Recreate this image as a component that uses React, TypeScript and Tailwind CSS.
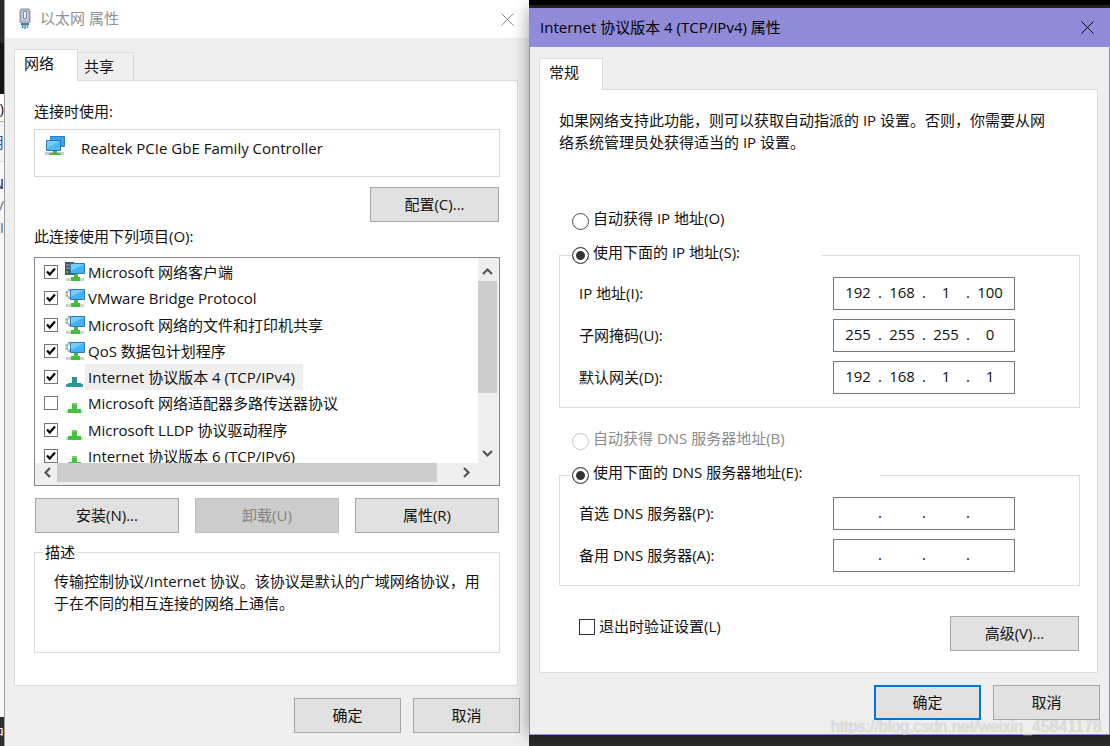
import { useState } from 'react';
import type { ReactNode } from 'react';
import clsx from 'clsx';

type IconKind = 'client' | 'service' | 'protocol';

// Components bound to the adapter, in list order
const CONNECTION_ITEMS: { name: string; icon: IconKind; checked: boolean }[] = [
  { name: 'Microsoft 网络客户端', icon: 'client', checked: true },
  { name: 'VMware Bridge Protocol', icon: 'service', checked: true },
  { name: 'Microsoft 网络的文件和打印机共享', icon: 'service', checked: true },
  { name: 'QoS 数据包计划程序', icon: 'service', checked: true },
  { name: 'Internet 协议版本 4 (TCP/IPv4)', icon: 'protocol', checked: true },
  { name: 'Microsoft 网络适配器多路传送器协议', icon: 'protocol', checked: false },
  { name: 'Microsoft LLDP 协议驱动程序', icon: 'protocol', checked: true },
  { name: 'Internet 协议版本 6 (TCP/IPv6)', icon: 'protocol', checked: true },
];

const IP_FIELDS = [
  { id: 'ip', label: 'IP 地址(I):', value: ['192', '168', '1', '100'] },
  { id: 'mask', label: '子网掩码(U):', value: ['255', '255', '255', '0'] },
  { id: 'gateway', label: '默认网关(D):', value: ['192', '168', '1', '1'] },
];

const DNS_FIELDS = [
  { id: 'dns1', label: '首选 DNS 服务器(P):', value: ['', '', '', ''] },
  { id: 'dns2', label: '备用 DNS 服务器(A):', value: ['', '', '', ''] },
];

function EthernetIcon() {
  return (
    <svg width="14" height="22" viewBox="0 0 14 22" aria-hidden="true">
      <path d="M3 1h8l1 2v11l-2 2H4l-2-2V3z" fill="#aeb9ca" stroke="#8390a5" />
      <path d="M4 3h6v9H4z" fill="#c9d2df" />
      <path d="M5.500 3.500h3v7h-3z" fill="#e8edf4" stroke="#7a879c" />
      <path d="M3 15h8v2H3z" fill="#5d7289" />
      <path d="M4 17h1.500v3H4zM6.300 17h1.500v4H6.300zM8.700 17h1.500v3H8.700z" fill="#2b9fd0" />
    </svg>
  );
}

function AdapterIcon() {
  return (
    <svg width="22" height="22" viewBox="0 0 22 22" aria-hidden="true">
      <path d="M5.500 1.500h14v10h-14z" fill="#3aa5ee" stroke="#2b7fb9" />
      <path d="M1.500 5.500h14v10h-14z" fill="#4db8fb" stroke="#2a78ad" />
      <path d="M2 6h13L2 13z" fill="#7acbff" />
      <path d="M0 17h19v3H0z" fill="#c9cdcb" />
      <path d="M8 16h4v2h3l1 2H4l1-2h3z" fill="#42b93c" />
    </svg>
  );
}

function ItemIcon({ kind, selected }: { kind: IconKind; selected: boolean }) {
  if (kind === 'protocol') {
    return (
      <svg width="20" height="20" viewBox="0 0 20 20" aria-hidden="true">
        <path d="M1 17h17v3H1z" fill={selected ? '#4d8fc7' : '#cfd8cd'} />
        <path d="M7 10h5v6h4v4H3v-4h4z" fill={selected ? '#259a94' : '#45c23d'} />
        <path d="M7 10h5v2H7z" fill={selected ? '#3c86ad' : '#72cf69'} />
      </svg>
    );
  }
  return (
    <svg width="20" height="20" viewBox="0 0 20 20" aria-hidden="true">
      {kind === 'client' ? (
        <>
          <path d="M0 0h9v13H0z" fill="#4d5356" />
          <path d="M1 3h4M1 6h4" stroke="#a9b0b3" />
          <path d="M1 10h2" stroke="#44c83b" strokeWidth="2" />
        </>
      ) : (
        <>
          <circle cx="5.500" cy="6" r="4" fill="#eef1f2" stroke="#a5adb1" strokeWidth="3" strokeDasharray="2 1.200" />
          <circle cx="5.500" cy="6" r="3.500" fill="#f5f7f8" stroke="#9da6ab" />
        </>
      )}
      <path d="M5.500 1.500h14v10h-14z" fill="#45b1f8" stroke="#2b7cae" />
      <path d="M6 2h13L6 9z" fill="#78caff" />
      <path d="M1 16h18v3H1z" fill="#ced4ce" />
      <path d="M9 12h4v3h2v4H6v-4h3z" fill="#40bf39" />
    </svg>
  );
}

function CloseButton({ active }: { active: boolean }) {
  return (
    <button aria-label="关闭" className={active ? 'text-black' : 'text-[#8b8b8b]'}>
      <svg width="13" height="13" viewBox="0 0 13 13" fill="none" stroke="currentColor" aria-hidden="true">
        <path d="M.5.5l12 12M12.500.5l-12 12" />
      </svg>
    </button>
  );
}

function ScrollArrow({ label, d }: { label: string; d: string }) {
  return (
    <button aria-label={label} className="flex h-[19px] w-[19px] shrink-0 items-center justify-center">
      <svg width="11" height="11" viewBox="0 0 11 11" fill="none" stroke="#555" strokeWidth="2.200" aria-hidden="true">
        <path d={d} />
      </svg>
    </button>
  );
}

function PushButton({ children, className, disabled, primary }: {
  children: ReactNode;
  className?: string;
  disabled?: boolean;
  primary?: boolean;
}) {
  return (
    <button
      disabled={disabled}
      className={clsx(
        'h-[35px] pb-0.5 text-center',
        primary ? 'border-2 border-[#0078d7]' : 'border',
        disabled ? 'border-[#bfbfbf] bg-[#cccccc] text-[#848484]' : 'bg-[#e1e1e1]',
        !disabled && !primary && 'border-[#a6a6a6]',
        className,
      )}
    >
      {children}
    </button>
  );
}

function Checkbox({ id, checked, large }: { id: string; checked?: boolean; large?: boolean }) {
  return (
    <span className="grid shrink-0 items-center justify-items-center">
      <input
        id={id}
        type="checkbox"
        defaultChecked={checked}
        className={clsx(
          'peer col-start-1 row-start-1 appearance-none border bg-white',
          large ? 'size-4 border-[#333]' : 'size-3.5 border-[#777]',
        )}
      />
      <svg
        className="pointer-events-none invisible col-start-1 row-start-1 peer-checked:visible"
        width="10"
        height="10"
        viewBox="0 0 10 10"
        fill="none"
        stroke="#000"
        strokeWidth="2.200"
        aria-hidden="true"
      >
        <path d="M1 4.500l2.700 3L9 1.500" />
      </svg>
    </span>
  );
}

function Radio({ name, label, checked, disabled }: {
  name: string;
  label: string;
  checked?: boolean;
  disabled?: boolean;
}) {
  return (
    <label className={clsx('flex h-[22px] items-center gap-1', disabled && 'text-[#8b8b8b]')}>
      <input
        type="radio"
        name={name}
        defaultChecked={checked}
        disabled={disabled}
        className="size-[17px] shrink-0 appearance-none rounded-full border border-[#4a4a4a] bg-white checked:bg-[#333] checked:shadow-[inset_0_0_0_3px_#fff] disabled:border-[#c4c4c4]"
      />
      <span className="pb-1.5 leading-4 whitespace-nowrap">{label}</span>
    </label>
  );
}

function AddressField({ id, label, value }: { id: string; label: string; value: string[] }) {
  return (
    <div className="flex items-center">
      <label htmlFor={id} className="w-[254px] shrink-0 pb-0.5">{label}</label>
      <div className="flex h-[33px] w-[182px] border border-[#7a7a7a] bg-white pb-1 pl-1">
        {value.map((part, i) => (
          <span key={i} className="flex items-center">
            {i > 0 && <span className="w-1 text-center">.</span>}
            <input
              id={i === 0 ? id : undefined}
              aria-label={i === 0 ? undefined : `${label} ${i + 1}`}
              defaultValue={part}
              maxLength={3}
              className="w-10 bg-transparent text-center outline-none"
            />
          </span>
        ))}
      </div>
    </div>
  );
}

function TabPanel({ tabs, children }: { tabs: string[]; children: ReactNode }) {
  const [active, setActive] = useState(tabs[0]);

  return (
    <div className="pt-[11px] pr-[11px] pl-[9px]">
      <div role="tablist" className="flex h-[31px] items-end">
        {tabs.map((tab) => (
          <button
            key={tab}
            role="tab"
            aria-selected={tab === active}
            onClick={() => setActive(tab)}
            className={clsx(
              'border-[#dcdcdc] text-left',
              tab === active
                ? 'z-10 -mb-px h-8 w-16 border border-b-0 bg-white pb-1.5 pl-[9px]'
                : 'h-7 w-14 border-t border-r pb-0.5 pl-1.5',
            )}
          >
            {tab}
          </button>
        ))}
      </div>
      <div role="tabpanel" className="border border-[#dcdcdc] bg-white pt-[19px] pr-[17px] pl-[19px]">
        {children}
      </div>
    </div>
  );
}

function DialogFooter({ primary }: { primary?: boolean }) {
  return (
    <div className="flex justify-end gap-3 pt-3 pr-[9px] pb-3.5">
      <PushButton className="w-[107px]" primary={primary}>确定</PushButton>
      <PushButton className="w-[107px]">取消</PushButton>
    </div>
  );
}

function ConnectionList() {
  return (
    <div className="mt-2.5 h-[229px] border border-[#828790] bg-[#efefef] pr-0.5 pb-[3px]">
      <div className="flex h-[205px] overflow-hidden">
        <ul className="grid h-[211px] flex-1 grid-rows-8 bg-white pt-px pl-[9px]">
          {CONNECTION_ITEMS.map((item, i) => {
            const selected = i === 4;
            return (
              <li key={item.name} className="flex items-center">
                <Checkbox id={`item-${i}`} checked={item.checked} />
                <span className="pl-[7px]">
                  <ItemIcon kind={item.icon} selected={selected} />
                </span>
                <label
                  htmlFor={`item-${i}`}
                  className={clsx('pr-2 pl-[3px] leading-[26px] whitespace-nowrap', selected && 'bg-[#efefef]')}
                >
                  {item.name}
                </label>
              </li>
            );
          })}
        </ul>
        <div className="flex h-[205px] w-[19px] flex-col justify-between pt-1">
          <div>
            <ScrollArrow label="向上滚动" d="M1 8l4.500-4.500L10 8" />
            <div className="h-[112px] bg-[#cdcdcd]" />
          </div>
          <ScrollArrow label="向下滚动" d="M1 3l4.500 4.500L10 3" />
        </div>
      </div>
      <div className="flex h-[19px] pr-[21px] pl-[3px]">
        <ScrollArrow label="向左滚动" d="M8 1L3.500 5.500 8 10" />
        <div className="mr-5 flex-1 bg-[#cdcdcd]" />
        <ScrollArrow label="向右滚动" d="M3 1l4.500 4.500L3 10" />
      </div>
    </div>
  );
}

function EthernetDialog() {
  return (
    <section className="min-w-0 bg-[#efefef]">
      <header className="flex h-[38px] items-center bg-white pr-[15px] pl-[13px] text-[#929292]">
        <EthernetIcon />
        <h1 className="flex-1 pb-0.5 pl-2">以太网 属性</h1>
        <CloseButton active={false} />
      </header>

      <TabPanel tabs={['网络', '共享']}>
        <p>连接时使用:</p>
        <div className="mt-[7px] flex h-12 items-start border border-[#d5d5d5] pt-[5px] pl-2.5">
          <AdapterIcon />
          <span className="pt-0.5 pl-3.5">Realtek PCIe GbE Family Controller</span>
        </div>
        <div className="flex justify-end pt-2.5 pr-px">
          <PushButton className="w-[129px]">配置(C)...</PushButton>
        </div>

        <p className="pt-[3px]">此连接使用下列项目(O):</p>
        <ConnectionList />

        <div className="grid grid-cols-3 gap-4 px-px pt-3">
          <PushButton>安装(N)...</PushButton>
          <PushButton disabled>卸载(U)</PushButton>
          <PushButton>属性(R)</PushButton>
        </div>

        <fieldset className="mt-2 mb-8 h-[112px] border border-[#dcdcdc] px-2">
          <legend className="px-0.5">描述</legend>
          <p className="pt-[7px] pr-1 pl-[11px]">
            传输控制协议/Internet 协议。该协议是默认的广域网络协议，用于在不同的相互连接的网络上通信。
          </p>
        </fieldset>
      </TabPanel>

      <DialogFooter />
    </section>
  );
}

function IPv4Dialog() {
  return (
    <section className="z-10 border border-t-0 border-[#8f8bd8] bg-[#efefef] shadow-[0_0_16px_rgba(0,0,0,0.4)]">
      <header className="flex h-[39px] items-center bg-[#8f8bd8] pr-[15px] pl-2.5 text-black">
        <h1 className="flex-1 pb-0.5">Internet 协议版本 4 (TCP/IPv4) 属性</h1>
        <CloseButton active />
      </header>

      <TabPanel tabs={['常规']}>
        <p className="max-w-[500px]">
          如果网络支持此功能，则可以获取自动指派的 IP 设置。否则，你需要从网络系统管理员处获得适当的 IP 设置。
        </p>

        <div className="pt-[57px] pl-[13px]">
          <Radio name="ip-mode" label="自动获得 IP 地址(O)" />
        </div>
        <fieldset className="mt-3 border border-[#dcdcdc] px-3 pb-[13px]">
          <legend className="w-[250px]">
            <Radio name="ip-mode" label="使用下面的 IP 地址(S):" checked />
          </legend>
          <div className="flex flex-col gap-[9px] pt-[11px] pl-[7px]">
            {IP_FIELDS.map((field) => (
              <AddressField key={field.id} {...field} />
            ))}
          </div>
        </fieldset>

        <div className="pt-[22px] pl-[13px]">
          <Radio name="dns-mode" label="自动获得 DNS 服务器地址(B)" disabled />
        </div>
        <fieldset className="mt-3 border border-[#dcdcdc] px-3 pb-[13px]">
          <legend className="w-[308px]">
            <Radio name="dns-mode" label="使用下面的 DNS 服务器地址(E):" checked />
          </legend>
          <div className="flex flex-col gap-[9px] pt-[11px] pl-[7px]">
            {DNS_FIELDS.map((field) => (
              <AddressField key={field.id} {...field} />
            ))}
          </div>
        </fieldset>

        <div className="flex items-start justify-between pt-[30px] pr-px pb-[21px] pl-5">
          <div className="flex items-center gap-1">
            <Checkbox id="validate" large />
            <label htmlFor="validate" className="pb-0.5 leading-5">退出时验证设置(L)</label>
          </div>
          <PushButton className="w-[129px]">高级(V)...</PushButton>
        </div>
      </TabPanel>

      <DialogFooter primary />
    </section>
  );
}

// Sliver of the windows that sit behind the dialogs
function BackgroundEdge() {
  return (
    <div className="flex flex-col overflow-hidden border-r border-[#9a9a9a] bg-[#f3f3f3]">
      <div className="h-[43px] bg-[#2a2a2a]" />
      <div className="h-[51px] bg-[#151515]" />
      <div className="flex h-7 items-center justify-end border-b border-[#aaa] bg-white">E)</div>
      <div className="flex h-10 items-center justify-end border-b border-[#ddd] text-[#31588c]">用</div>
      <div className="flex flex-1 flex-col items-end bg-[#f8f8f8] pt-2.5">
        <span>N</span>
        <span className="text-[#777]">V</span>
        <span className="text-[#4f6f9c]">(I</span>
      </div>
      <div className="flex h-[30px] items-center justify-end bg-[#2e2e2e] text-white">中</div>
    </div>
  );
}

export default function App() {
  return (
    <main className="relative grid min-h-screen grid-cols-[5px_524fr_581fr] overflow-hidden bg-[#2b2b2b] font-['Open_Sans','Noto_Sans_CJK_SC',sans-serif] text-[15px] leading-[22px] text-[#111]">
      <BackgroundEdge />
      <EthernetDialog />
      <div className="flex min-w-0 flex-col">
        <div className="h-2 border-b-[3px] border-[#2b2626] bg-black" />
        <IPv4Dialog />
      </div>
      <span className="pointer-events-none absolute right-2 bottom-2 z-20 font-['Liberation_Sans',sans-serif] text-base text-white/60 [text-shadow:0_0_1px_rgba(0,0,0,0.3)]">
        https://blog.csdn.net/weixin_45841178
      </span>
    </main>
  );
}
